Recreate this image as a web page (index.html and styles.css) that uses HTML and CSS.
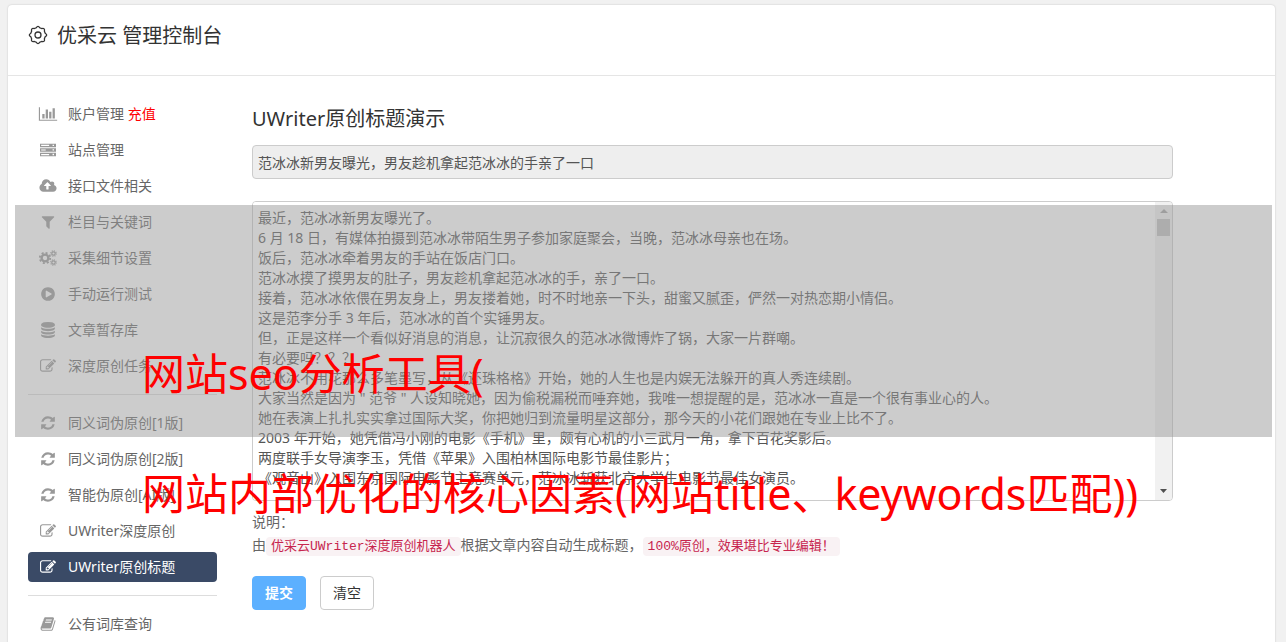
FILE: index.html
```
<!DOCTYPE html>
<html lang="zh-CN">
  <head>
    <meta charset="utf-8">
    <title>优采云 管理控制台</title>
    <link rel="stylesheet" href="styles.css">
  </head>
  <body>
    <!-- Icon set -->
    <svg class="icon-defs" aria-hidden="true">
      <symbol id="i-chart" viewBox="0 0 2048 1792"><path d="M640 896v512h-256v-512h256zM1024 384v1024h-256v-1024h256zM2048 1536v128h-2048v-1536h128v1408h1920zM1408 640v768h-256v-768h256zM1792 256v1152h-256v-1152h256z"/></symbol>
      <symbol id="i-server" viewBox="0 0 1792 1792"><path fill-rule="evenodd" d="M0 192h1792v384H0zM128 320v128h896V320zM1408 304v144h160V304zM0 704h1792v384H0zM128 832v128h512V832zM1408 816v144h160V816zM0 1216h1792v384H0zM128 1344v128h896v-128zM1408 1328v144h160v-144z"/></symbol>
      <symbol id="i-cloud" viewBox="0 0 1920 1792"><path d="M1280 864q0-14-9-23l-352-352q-9-9-23-9t-23 9l-351 351q-10 12-10 24 0 14 9 23t23 9h224v352q0 13 9.500 22.500t22.500 9.500h192q13 0 22.500-9.500t9.500-22.500v-352h224q13 0 22.500-9.500t9.500-22.500zm640 288q0 159-112.500 271.500t-271.500 112.500h-1088q-185 0-316.500-131.500t-131.500-316.500q0-130 70-240t188-165q-2-30-2-43 0-212 150-362t362-150q156 0 285.500 87t188.500 231q71-62 166-62 106 0 181 75t75 181q0 76-41 138 130 31 213.500 135.500t83.500 238.500z"/></symbol>
      <symbol id="i-filter" viewBox="0 0 1792 1792"><path d="M1595 295q17 41-14 70l-493 493v742q0 42-39 59-13 5-25 5-27 0-45-19l-256-256q-19-19-19-45v-486l-493-493q-31-29-14-70 17-39 59-39h1280q42 0 59 39z"/></symbol>
      <symbol id="i-cogs" viewBox="0 0 18 16">
        <g fill="none" stroke="currentColor">
          <circle cx="6" cy="8" r="3.400" stroke-width="2.400"/>
          <circle cx="6" cy="8" r="5.200" stroke-width="1.800" stroke-dasharray="2.040 2.040"/>
          <circle cx="14.500" cy="3.500" r="1.700" stroke-width="1.200"/>
          <circle cx="14.500" cy="3.500" r="2.700" stroke-width="1.200" stroke-dasharray="1.060 1.060"/>
          <circle cx="14.500" cy="12.500" r="1.700" stroke-width="1.200"/>
          <circle cx="14.500" cy="12.500" r="2.700" stroke-width="1.200" stroke-dasharray="1.060 1.060"/>
        </g>
      </symbol>
      <symbol id="i-play" viewBox="0 0 1792 1792"><path d="M896 128q209 0 385.500 103t279.500 279.500 103 385.500-103 385.500-279.500 279.500-385.500 103-385.500-103-279.500-279.500-103-385.500 103-385.500 279.500-279.500 385.500-103zm384 823q32-18 32-55t-32-55l-544-320q-31-19-64-1-32 19-32 56v640q0 37 32 56 16 8 32 8 17 0 32-9z"/></symbol>
      <symbol id="i-database" viewBox="0 0 1792 1792"><path d="M896 768q237 0 443-43t325-127v170q0 69-103 128t-280 93.500-385 34.500-385-34.500-280-93.500-103-128v-170q119 84 325 127t443 43zm0 768q237 0 443-43t325-127v170q0 69-103 128t-280 93.500-385 34.500-385-34.500-280-93.500-103-128v-170q119 84 325 127t443 43zm0-384q237 0 443-43t325-127v170q0 69-103 128t-280 93.500-385 34.500-385-34.500-280-93.500-103-128v-170q119 84 325 127t443 43zm0-1152q208 0 385 34.500t280 93.500 103 128v128q0 69-103 128t-280 93.500-385 34.500-385-34.500-280-93.500-103-128v-128q0-69 103-128t280-93.500 385-34.500z"/></symbol>
      <symbol id="i-edit" viewBox="0 0 1792 1792"><path d="M888 1184l116-116-152-152-116 116v56h96v96h56zm440-720q-16-16-33 1l-350 350q-17 17-1 33t33-1l350-350q17-17 1-33zm80 594v190q0 119-84.500 203.500t-203.500 84.500h-832q-119 0-203.500-84.500t-84.500-203.500v-832q0-119 84.500-203.500t203.500-84.500h832q63 0 117 25 15 7 18 23 3 17-9 29l-49 49q-14 14-32 8-23-6-45-6h-832q-66 0-113 47t-47 113v832q0 66 47 113t113 47h832q66 0 113-47t47-113v-126q0-13 9-22l64-64q15-15 35-7t20 29zm-96-738l288 288-672 672h-288v-288zm444 132l-92 92-288-288 92-92q28-28 68-28t68 28l152 152q28 28 28 68t-28 68z"/></symbol>
      <symbol id="i-refresh" viewBox="0 0 1792 1792"><path d="M1639 1056q0 5-1 7-64 268-268 434.500t-478 166.500q-146 0-282.500-55t-243.500-157l-129 129q-19 19-45 19t-45-19-19-45v-448q0-26 19-45t45-19h448q26 0 45 19t19 45-19 45l-137 137q71 66 161 102t187 36q134 0 250-65t186-179q11-17 53-117 8-23 30-23h192q13 0 22.500 9.500t9.500 22.500zm25-800v448q0 26-19 45t-45 19h-448q-26 0-45-19t-19-45 19-45l138-138q-148-137-349-137-134 0-250 65t-186 179q-11 17-53 117-8 23-30 23h-199q-13 0-22.500-9.500t-9.500-22.500v-7q65-268 270-434.500t480-166.500q146 0 284 55.500t245 156.500l130-129q19-19 45-19t45 19 19 45z"/></symbol>
      <symbol id="i-book" viewBox="0 0 1792 1792"><path d="M1703 478q40 57 18 129l-275 906q-19 64-76.500 107.500t-122.500 43.500h-923q-77 0-148.500-53.500t-99.500-131.500q-24-67-2-127 0-4 3-27t4-37q1-8-3-21.500t-3-19.500q2-11 8-21t16.500-23.500 16.500-23.500q23-38 45-91.500t30-91.500q3-10 .5-30t-.5-28q3-11 17-28t17-23q21-36 42-92t25-90q1-9-2.500-32t.5-28q4-13 22-30.500t22-22.500q19-26 42.500-84.500t27.500-96.500q1-8-3-25.500t-2-26.500q2-8 9-18t18-23 17-21q8-12 16.500-30.500t15-35 16-36 19.500-32 26.500-23.500 36-11.500 47.500 5.500l-1 3q38-9 51-9h761q74 0 114 56t18 130l-274 906q-36 119-71.500 153.500t-128.500 34.500h-869q-27 0-38 15-11 16-1 43 24 70 144 70h923q29 0 56-15.500t35-41.500l300-987q7-22 5-57 38 15 59 43zm-1064 2q-4 13 2 22.500t20 9.500h608q13 0 25.500-9.500t16.500-22.500l21-64q4-13-2-22.500t-20-9.500h-608q-13 0-25.500 9.500t-16.500 22.500zm-83 256q-4 13 2 22.500t20 9.500h608q13 0 25.500-9.500t16.500-22.500l21-64q4-13-2-22.500t-20-9.500h-608q-13 0-25.500 9.500t-16.500 22.500z"/></symbol>
    </svg>

    <div class="panel">
      <header class="panel-header">
        <svg class="gear" viewBox="0 0 20 20" aria-hidden="true">
          <path d="M8.200 2.800Q10-.2 11.800 2.800L13.800 3.600Q17.200 2.800 16.400 6.200L17.200 8.200Q20.200 10 17.200 11.800L16.400 13.800Q17.200 17.200 13.800 16.400L11.800 17.200Q10 20.200 8.200 17.200L6.200 16.400Q2.800 17.200 3.600 13.800L2.800 11.800Q-.2 10 2.800 8.200L3.600 6.200Q2.800 2.800 6.200 3.600Z"/>
          <circle cx="10" cy="10" r="3"/>
        </svg>
        <h1>优采云 管理控制台</h1>
      </header>

      <div class="panel-body">
        <nav class="sidebar">
          <a class="nav-item" href="#"><svg class="icon"><use href="#i-chart"/></svg><span>账户管理 <em class="recharge">充值</em></span></a>
          <a class="nav-item" href="#"><svg class="icon"><use href="#i-server"/></svg><span>站点管理</span></a>
          <a class="nav-item" href="#"><svg class="icon"><use href="#i-cloud"/></svg><span>接口文件相关</span></a>
          <a class="nav-item" href="#"><svg class="icon"><use href="#i-filter"/></svg><span>栏目与关键词</span></a>
          <a class="nav-item" href="#"><svg class="icon"><use href="#i-cogs"/></svg><span>采集细节设置</span></a>
          <a class="nav-item" href="#"><svg class="icon"><use href="#i-play"/></svg><span>手动运行测试</span></a>
          <a class="nav-item" href="#"><svg class="icon"><use href="#i-database"/></svg><span>文章暂存库</span></a>
          <a class="nav-item" href="#"><svg class="icon"><use href="#i-edit"/></svg><span>深度原创任务</span></a>
          <hr>
          <a class="nav-item" href="#"><svg class="icon"><use href="#i-refresh"/></svg><span>同义词伪原创[1版]</span></a>
          <a class="nav-item" href="#"><svg class="icon"><use href="#i-refresh"/></svg><span>同义词伪原创[2版]</span></a>
          <a class="nav-item" href="#"><svg class="icon"><use href="#i-refresh"/></svg><span>智能伪原创[AI版]</span></a>
          <a class="nav-item" href="#"><svg class="icon"><use href="#i-edit"/></svg><span>UWriter深度原创</span></a>
          <a class="nav-item active" href="#"><svg class="icon"><use href="#i-edit"/></svg><span>UWriter原创标题</span></a>
          <hr>
          <a class="nav-item" href="#"><svg class="icon"><use href="#i-book"/></svg><span>公有词库查询</span></a>
        </nav>

        <main class="content">
          <form class="demo-form">
            <h2>UWriter原创标题演示</h2>
            <input class="title-input" type="text" aria-label="标题" value="范冰冰新男友曝光，男友趁机拿起范冰冰的手亲了一口" readonly>
            <div class="article">
              <textarea aria-label="文章内容">最近，范冰冰新男友曝光了。
6 月 18 日，有媒体拍摄到范冰冰带陌生男子参加家庭聚会，当晚，范冰冰母亲也在场。
饭后，范冰冰牵着男友的手站在饭店门口。
范冰冰摸了摸男友的肚子，男友趁机拿起范冰冰的手，亲了一口。
接着，范冰冰依偎在男友身上，男友搂着她，时不时地亲一下头，甜蜜又腻歪，俨然一对热恋期小情侣。
这是范李分手 3 年后，范冰冰的首个实锤男友。
但，正是这样一个看似好消息的消息，让沉寂很久的范冰冰微博炸了锅，大家一片群嘲。
有必要吗？？？
范冰冰不用花那么多笔墨写，从《还珠格格》开始，她的人生也是内娱无法躲开的真人秀连续剧。
大家当然是因为 " 范爷 " 人设知晓她，因为偷税漏税而唾弃她，我唯一想提醒的是，范冰冰一直是一个很有事业心的人。
她在表演上扎扎实实拿过国际大奖，你把她归到流量明星这部分，那今天的小花们跟她在专业上比不了。
2003 年开始，她凭借冯小刚的电影《手机》里，颇有心机的小三武月一角，拿下百花奖影后。
两度联手女导演李玉，凭借《苹果》入围柏林国际电影节最佳影片；
《观音山》入围东京国际电影节主竞赛单元，范冰冰斩获北京大学生电影节最佳女演员。</textarea>
              <div class="scrollbar" aria-hidden="true">
                <svg viewBox="0 0 17 17"><path fill="#a3a3a3" d="M5 11l4-4 4 4z"/></svg>
                <div class="thumb"></div>
                <svg class="down" viewBox="0 0 17 17"><path fill="#505050" d="M5 6h7l-3.500 4z"/></svg>
              </div>
            </div>
            <div class="help">
              <p>说明：</p>
              <p>由<code>优采云UWriter深度原创机器人</code>根据文章内容自动生成标题，<code>100%原创，效果堪比专业编辑！</code></p>
            </div>
            <div class="actions">
              <button type="submit" class="btn btn-primary">提交</button>
              <button type="reset" class="btn">清空</button>
            </div>
          </form>
        </main>
      </div>
    </div>

    <!-- Caption laid over the page -->
    <div class="caption">
      <p>网站seo分析工具(</p>
      <p>网站内部优化的核心因素(网站title、keywords匹配))</p>
    </div>
  </body>
</html>
```
FILE: styles.css
```
* {
  box-sizing: border-box;
}
body {
  position: relative;
  margin: 0;
  padding: 5px 11px 0 8px;
  height: 100vh;
  overflow: hidden;
  background-color: #f1f1f1;
  color: #666;
  font-family: "Noto Sans", "Noto Sans CJK SC", sans-serif;
  font-size: 14px;
  line-height: 20px;
}
h1,
h2,
p {
  margin: 0;
  font-weight: normal;
}
.icon-defs {
  position: absolute;
  width: 0;
  height: 0;
}
.panel {
  min-height: 100vh;
  background: white;
  border-radius: 4px;
  box-shadow: 0 0 2px rgba(0, 0, 0, 0.2);
}
.panel-header {
  display: flex;
  align-items: center;
  gap: 9px;
  height: 71px;
  padding: 0 20px 8px;
  border-bottom: 1px solid #e5e5e5;
  color: #333;
}
.panel-header h1 {
  font-size: 20px;
  line-height: 28px;
}
.gear {
  width: 20px;
  height: 20px;
  margin-bottom: 2px;
  fill: none;
  stroke: #333;
  stroke-width: 1.3;
}
.panel-body {
  display: flex;
  gap: 35px;
  padding: 23px 0 0 20px;
}
.sidebar {
  flex: none;
  width: 189px;
}
.sidebar hr {
  margin: 13px 0;
  border: none;
  border-top: 1px solid #ddd;
}
.nav-item {
  display: flex;
  align-items: center;
  gap: 10px;
  height: 30px;
  margin-bottom: 6px;
  padding: 0 10px;
  border-radius: 4px;
  color: #666;
  text-decoration: none;
}
.nav-item:has(+ hr) {
  margin-bottom: 0;
}
.icon {
  width: 20px;
  height: 16px;
  fill: #999;
  color: #999;
}
.recharge {
  color: red;
  font-style: normal;
}
.active {
  background: #3a4a66;
  color: white;
}
.active .icon {
  fill: white;
}
.content {
  flex: 1;
}
.demo-form {
  width: 90%;
}
.demo-form h2 {
  margin-bottom: 12px;
  padding-top: 6px;
  color: #333;
  font-size: 20px;
  line-height: 28px;
}
.title-input {
  display: block;
  width: 100%;
  height: 34px;
  padding: 6px 5px;
  border: 1px solid #ccc;
  border-radius: 4px;
  background: #eee;
  color: #555;
  font: inherit;
}
.article {
  display: flex;
  height: 300px;
  margin: 22px 0 11px;
  border: 1px solid #ccc;
  border-radius: 4px;
  overflow: hidden;
}
.article textarea {
  flex: 1;
  padding: 6px 5px;
  border: none;
  outline: none;
  resize: none;
  overflow: hidden;
  background: white;
  color: #555;
  font: inherit;
}
.scrollbar {
  display: flex;
  flex-direction: column;
  width: 17px;
  background: #f1f1f1;
}
.scrollbar svg {
  width: 17px;
  height: 17px;
}
.scrollbar .down {
  margin-top: auto;
}
.thumb {
  height: 17px;
  margin: 0 2px;
  background: #c1c1c1;
}
.help p + p {
  margin-top: 3px;
}
.help code {
  padding: 2px 5px;
  border-radius: 4px;
  background: #f9f2f4;
  color: #c7254e;
  font-family: "Liberation Mono", "Noto Sans CJK SC", monospace;
  font-size: 13px;
  line-height: 1;
}
.actions {
  display: flex;
  gap: 14px;
  margin-top: 21px;
}
.btn {
  height: 34px;
  padding: 6px 12px;
  border: 1px solid #ccc;
  border-radius: 4px;
  background: white;
  color: #333;
  font: inherit;
  cursor: pointer;
}
.btn-primary {
  border-color: #5cb0ff;
  background: #5cb0ff;
  color: white;
  font-weight: bold;
}
.caption {
  position: absolute;
  top: 205px;
  left: 15px;
  right: 14px;
  height: 232px;
  padding: 109px 0 0 127px;
  background: rgba(153, 153, 153, 0.5);
  color: red;
  font-size: 43px;
  line-height: 120px;
  white-space: nowrap;
  pointer-events: none;
}
```
